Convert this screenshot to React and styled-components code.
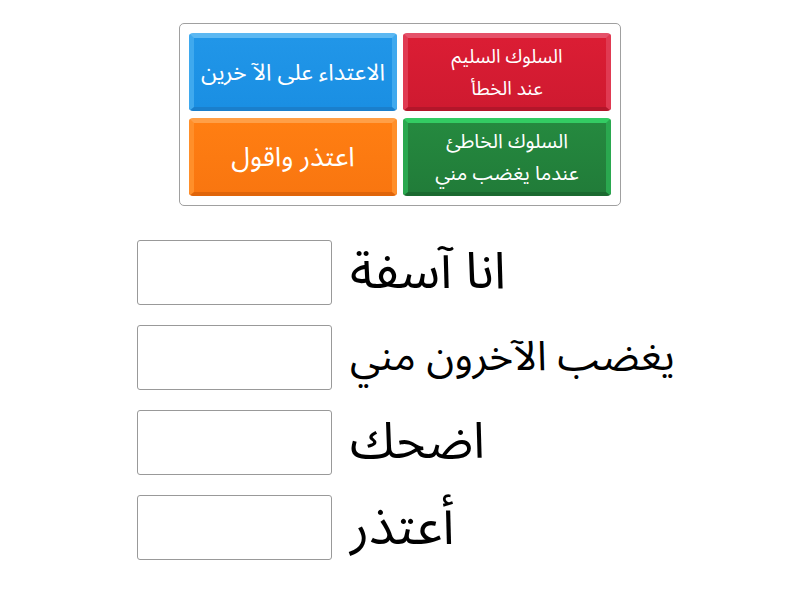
import React from "react";
import styled, { createGlobalStyle } from "styled-components";

const Global = createGlobalStyle`
  html, body { margin: 0; padding: 0; background: #fff; }
  body { font-family: "Noto Sans Arabic", "Noto Sans", sans-serif; }
`;

const Page = styled.div`
  width: 800px;
  height: 600px;
  display: flex;
  flex-direction: column;
  align-items: center;
  padding-top: 23px;
  box-sizing: border-box;
`;

const Board = styled.div`
  width: 442px;
  box-sizing: border-box;
  border: 1px solid #a0a0a0;
  border-radius: 5px;
  padding: 9px;
  display: grid;
  grid-template-columns: 208px 208px;
  grid-auto-rows: 78px;
  column-gap: 6px;
  row-gap: 7px;
`;

const palettes = {
  blue: { top: "#5cb8f2", side: "#3fa9ee", face1: "#2196e8", face2: "#1a8fe3", bottom: "#1a7fcc" },
  red: { top: "#e5526a", side: "#e03a52", face1: "#db1d34", face2: "#cf1a30", bottom: "#b3162a" },
  orange: { top: "#ff9f47", side: "#ff8f2a", face1: "#ff7e12", face2: "#f97610", bottom: "#e0650a" },
  green: { top: "#33cc63", side: "#2aa84f", face1: "#25893f", face2: "#217c39", bottom: "#1b6a30" },
};

const Tile = styled.div`
  box-sizing: border-box;
  border-radius: 4px;
  border-style: solid;
  border-width: 5px 5px 4px 5px;
  border-color: ${(p) => palettes[p.$c].top} ${(p) => palettes[p.$c].side}
    ${(p) => palettes[p.$c].bottom} ${(p) => palettes[p.$c].side};
  background: linear-gradient(${(p) => palettes[p.$c].face1}, ${(p) => palettes[p.$c].face2});
  color: #fff;
  display: flex;
  align-items: center;
  justify-content: center;
  text-align: center;
  direction: rtl;
  font-family: "Noto Sans Arabic", sans-serif;
  font-size: ${(p) => p.$size}px;
  line-height: ${(p) => p.$lh}px;
`;

const Rows = styled.div`
  margin-top: 34px;
  width: 800px;
  display: flex;
  flex-direction: column;
  gap: 20px;
  padding-left: 137px;
  box-sizing: border-box;
`;

const Row = styled.div`
  display: flex;
  align-items: center;
  gap: 18px;
  height: 65px;
`;

const Slot = styled.div`
  width: 195px;
  height: 65px;
  box-sizing: border-box;
  border: 1px solid #999;
  border-radius: 3px;
  background: #fff;
  flex: none;
`;

const Phrase = styled.div`
  direction: rtl;
  font-family: "Noto Sans Arabic", sans-serif;
  font-size: ${(p) => p.$size}px;
  line-height: 65px;
  color: #000;
  white-space: nowrap;
`;

const tiles = [
  { c: "blue", size: 23, lh: 30, lines: ["الاعتداء على الآ خرين"] },
  { c: "red", size: 19, lh: 32, lines: ["السلوك السليم", "عند الخطأ"] },
  { c: "orange", size: 27, lh: 32, lines: ["اعتذر واقول"] },
  { c: "green", size: 20, lh: 32, lines: ["السلوك الخاطئ", "عندما يغضب مني"] },
];

const phrases = [
  { t: "انا آسفة", s: 51 },
  { t: "يغضب الآخرون مني", s: 41 },
  { t: "اضحك", s: 50 },
  { t: "أعتذر", s: 52 },
];

export default function App() {
  return (
    <>
      <Global />
      <Page>
        <Board>
          {tiles.map((t, i) => (
            <Tile key={i} $c={t.c} $size={t.size} $lh={t.lh}>
              <div>
                {t.lines.map((l, j) => (
                  <div key={j}>{l}</div>
                ))}
              </div>
            </Tile>
          ))}
        </Board>
        <Rows>
          {phrases.map((p, i) => (
            <Row key={i}>
              <Slot />
              <Phrase $size={p.s}>{p.t}</Phrase>
            </Row>
          ))}
        </Rows>
      </Page>
    </>
  );
}
